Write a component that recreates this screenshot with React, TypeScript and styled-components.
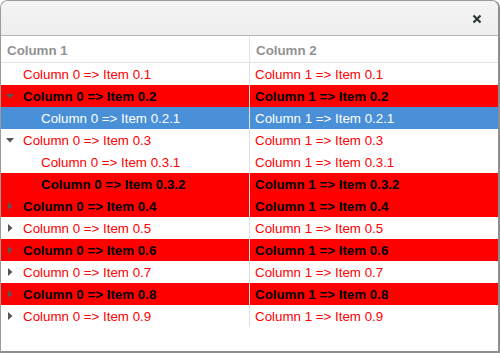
import React from "react";
import styled, { createGlobalStyle } from "styled-components";

const GlobalStyle = createGlobalStyle`
  html, body {
    margin: 0;
    padding: 0;
    background: #ffffff;
  }
  body {
    font-family: "Liberation Sans", Arial, sans-serif;
    font-size: 13.33px;
  }
`;

type RowKind = "plain" | "hot" | "selected";

interface TreeRow {
  id: string;
  level: number;
  expander: "down" | "right" | null;
  kind: RowKind;
}

const rows: TreeRow[] = [
  { id: "0.1", level: 0, expander: null, kind: "plain" },
  { id: "0.2", level: 0, expander: "down", kind: "hot" },
  { id: "0.2.1", level: 1, expander: null, kind: "selected" },
  { id: "0.3", level: 0, expander: "down", kind: "plain" },
  { id: "0.3.1", level: 1, expander: null, kind: "plain" },
  { id: "0.3.2", level: 1, expander: null, kind: "hot" },
  { id: "0.4", level: 0, expander: "right", kind: "hot" },
  { id: "0.5", level: 0, expander: "right", kind: "plain" },
  { id: "0.6", level: 0, expander: "right", kind: "hot" },
  { id: "0.7", level: 0, expander: "right", kind: "plain" },
  { id: "0.8", level: 0, expander: "right", kind: "hot" },
  { id: "0.9", level: 0, expander: "right", kind: "plain" },
];

const bgFor = { plain: "#ffffff", hot: "#ff0000", selected: "#4a90d9" };
const fgFor = { plain: "#ff0000", hot: "#000000", selected: "#ffffff" };

const Window = styled.div`
  box-sizing: border-box;
  width: 500px;
  height: 353px;
  display: flex;
  flex-direction: column;
  background: #ffffff;
  border: 1px solid #9b9b9b;
  border-right: 2px solid #8e8e8e;
  border-bottom: 2px solid #8e8e8e;
  border-radius: 8px 8px 0 0;
  overflow: hidden;
`;

const HeaderBar = styled.div`
  box-sizing: border-box;
  height: 35px;
  flex: 0 0 auto;
  display: flex;
  align-items: center;
  justify-content: flex-end;
  padding-right: 9px;
  background: linear-gradient(#f4f4f4, #eeeeee);
  border-bottom: 1px solid #b7b7b7;
`;

const CloseButton = styled.button`
  width: 24px;
  height: 24px;
  display: flex;
  align-items: center;
  justify-content: center;
  margin-top: 2px;
  padding: 0;
  border: none;
  background: transparent;
  cursor: pointer;
`;

const Tree = styled.div`
  display: grid;
  grid-template-columns: 249px 1fr;
  grid-template-rows: 27px;
  grid-auto-rows: 22px;
  align-content: start;
  flex: 1 1 auto;
`;

const HeadCell = styled.div<{ $last?: boolean }>`
  box-sizing: border-box;
  display: flex;
  align-items: center;
  padding-left: 6px;
  padding-top: 2px;
  font-weight: bold;
  color: #929292;
  border-bottom: 1px solid #e2e2e2;
  border-right: ${(p) => (p.$last ? "none" : "1px solid #e2e2e2")};
`;

const Cell = styled.div<{ $kind: RowKind; $last?: boolean; $level?: number }>`
  box-sizing: border-box;
  display: flex;
  align-items: center;
  white-space: nowrap;
  overflow: hidden;
  padding-left: ${(p) => (p.$last ? "5px" : `${1 + (p.$level ?? 0) * 18}px`)};
  background: ${(p) => bgFor[p.$kind]};
  color: ${(p) => fgFor[p.$kind]};
  font-weight: ${(p) => (p.$kind === "hot" ? "bold" : "normal")};
  border-right: ${(p) => (p.$last ? "none" : "1px solid #e0e0e0")};
`;

const Expander = styled.span`
  width: 16px;
  height: 22px;
  margin-right: 5px;
  display: flex;
  align-items: center;
  justify-content: center;
  flex: 0 0 auto;
`;

const Arrow = ({ dir }: { dir: "down" | "right" | null }): JSX.Element => {
  if (!dir) return <Expander />;
  return (
    <Expander>
      <svg width="10" height="10" viewBox="0 0 10 10">
        {dir === "down" ? (
          <polygon points="1,3 9,3 5,7.5" fill="#555753" />
        ) : (
          <polygon points="3,1 7.5,5 3,9" fill="#555753" />
        )}
      </svg>
    </Expander>
  );
};

const App = (): JSX.Element => {
  return (
    <React.Fragment>
      <GlobalStyle />
      <Window>
        <HeaderBar>
          <CloseButton aria-label="Close">
            <svg width="10" height="10" viewBox="0 0 10 10">
              <path d="M1.5 1.5 L8.5 8.5 M8.5 1.5 L1.5 8.5" stroke="#2e3436" strokeWidth="2.2" />
            </svg>
          </CloseButton>
        </HeaderBar>
        <Tree>
          <HeadCell>Column 1</HeadCell>
          <HeadCell $last>Column 2</HeadCell>
          {rows.map((row) => (
            <React.Fragment key={row.id}>
              <Cell $kind={row.kind} $level={row.level}>
                <Arrow dir={row.expander} />
                Column 0 =&gt; Item {row.id}
              </Cell>
              <Cell $kind={row.kind} $last>
                Column 1 =&gt; Item {row.id}
              </Cell>
            </React.Fragment>
          ))}
        </Tree>
      </Window>
    </React.Fragment>
  );
};

export default App;
